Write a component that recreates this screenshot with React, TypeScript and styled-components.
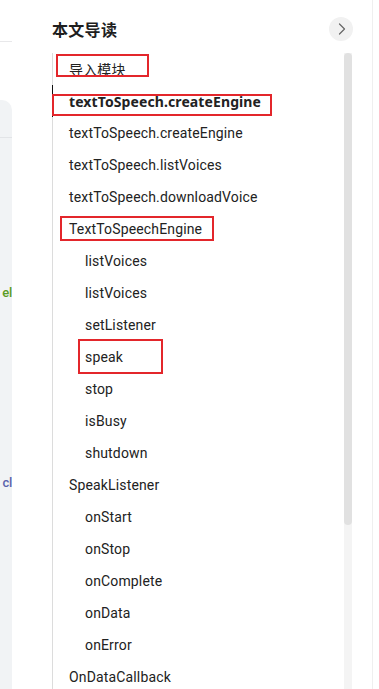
import React from 'react'
import { styled, createGlobalStyle } from 'styled-components'

const GlobalStyle = createGlobalStyle`
  html, body {
    margin: 0;
    padding: 0;
    background: #ffffff;
  }
  body {
    font-family: Roboto, "Liberation Sans", "Noto Sans CJK SC", sans-serif;
  }
`

type NavItem = {
  label: string
  level: 1 | 2
  active?: boolean
}

const items: NavItem[] = [
  { label: '导入模块', level: 1 },
  { label: 'textToSpeech.createEngine', level: 1, active: true },
  { label: 'textToSpeech.createEngine', level: 1 },
  { label: 'textToSpeech.listVoices', level: 1 },
  { label: 'textToSpeech.downloadVoice', level: 1 },
  { label: 'TextToSpeechEngine', level: 1 },
  { label: 'listVoices', level: 2 },
  { label: 'listVoices', level: 2 },
  { label: 'setListener', level: 2 },
  { label: 'speak', level: 2 },
  { label: 'stop', level: 2 },
  { label: 'isBusy', level: 2 },
  { label: 'shutdown', level: 2 },
  { label: 'SpeakListener', level: 1 },
  { label: 'onStart', level: 2 },
  { label: 'onStop', level: 2 },
  { label: 'onComplete', level: 2 },
  { label: 'onData', level: 2 },
  { label: 'onError', level: 2 },
  { label: 'OnDataCallback', level: 1 },
]

// annotation boxes drawn over the outline
const marks = [
  { left: 56, top: 54, width: 93, height: 23 },
  { left: 52, top: 94, width: 220, height: 22 },
  { left: 60, top: 216, width: 154, height: 25 },
  { left: 78, top: 339, width: 85, height: 35 },
]

export default function App() {
  return (
    <>
      <GlobalStyle />
      <Page>
        <LeftPane>
          <TopRule />
          <Card>
            <CardRule />
            <Snippet color="#5c9c24" offset={145}>
              el
            </Snippet>
            <Snippet color="#5b63ad" offset={170}>
              cl
            </Snippet>
          </Card>
        </LeftPane>

        <Outline>
          <Header>
            <Title>本文导读</Title>
            <CollapseButton aria-label="collapse">
              <svg width="8" height="12" viewBox="0 0 8 12" fill="none">
                <path d="M1.5 1 L6.5 6 L1.5 11" stroke="#666" strokeWidth="1.2" strokeLinecap="round" strokeLinejoin="round" />
              </svg>
            </CollapseButton>
          </Header>
          <Body>
            <List>
              {items.map((item, i) => (
                <Item key={i} level={item.level} active={item.active}>
                  {item.label}
                </Item>
              ))}
            </List>
            <ScrollTrack>
              <ScrollThumb />
            </ScrollTrack>
          </Body>
        </Outline>

        <RightEdge />

        {marks.map((m, i) => (
          <Mark key={i} style={{ left: m.left, top: m.top, width: m.width, height: m.height }} />
        ))}
      </Page>
    </>
  )
}

const Page = styled.div`
  position: relative;
  display: flex;
  width: 379px;
  height: 689px;
  overflow: hidden;
  background: #ffffff;
`

const LeftPane = styled.div`
  width: 12px;
  flex-shrink: 0;
  display: flex;
  flex-direction: column;
  margin-right: 40px;
`

const TopRule = styled.div`
  margin-top: 41px;
  height: 1px;
  background: #e8e8ea;
`

const Card = styled.div`
  margin-top: 58px;
  flex: 1;
  background: #f1f3f5;
  border-radius: 0 10px 0 0;
  overflow: hidden;
  display: flex;
  flex-direction: column;
`

const CardRule = styled.div`
  margin-top: 37px;
  height: 1px;
  background: #e2e4e7;
`

const Snippet = styled.div<{ color: string; offset: number }>`
  margin-top: ${({ offset }) => offset}px;
  display: flex;
  justify-content: flex-end;
  white-space: nowrap;
  font-size: 13px;
  line-height: 20px;
  font-weight: 500;
  letter-spacing: -0.3px;
  color: ${({ color }) => color};
`

const Outline = styled.div`
  width: 300px;
  flex-shrink: 0;
  display: flex;
  flex-direction: column;
`

const Header = styled.div`
  height: 53px;
  display: flex;
  align-items: center;
  justify-content: space-between;
  padding-top: 5px;
  box-sizing: border-box;
  margin-right: -1px;
`

const Title = styled.div`
  font-size: 16px;
  font-weight: 700;
  color: #1e1e1e;
  letter-spacing: 0.3px;
  font-family: "Noto Sans CJK SC", sans-serif;
`

const CollapseButton = styled.div`
  width: 24px;
  height: 24px;
  border-radius: 50%;
  background: #f1f1f1;
  display: flex;
  align-items: center;
  justify-content: center;
  padding-left: 1px;
  box-sizing: border-box;
`

const Body = styled.div`
  flex: 1;
  display: flex;
  min-height: 0;
`

const List = styled.div`
  flex: 1;
  border-left: 1px solid #dcdcdc;
  display: flex;
  flex-direction: column;
`

const Item = styled.div<{ level: 1 | 2; active?: boolean }>`
  height: 32px;
  flex-shrink: 0;
  display: flex;
  align-items: center;
  padding-left: ${({ level }) => (level === 1 ? 16 : 32)}px;
  margin-left: -1px;
  border-left: 1px solid ${({ active }) => (active ? '#111111' : 'transparent')};
  font-family: ${({ active }) =>
    active ? '"Noto Sans", Roboto, sans-serif' : 'Roboto, "Noto Sans CJK SC", sans-serif'};
  font-size: 14px;
  font-weight: ${({ active }) => (active ? 700 : 400)};
  letter-spacing: ${({ active }) => (active ? '0.1px' : '0.15px')};
  color: #222222;
  white-space: nowrap;
`

const ScrollTrack = styled.div`
  width: 8px;
  background: #f4f4f4;
  display: flex;
  flex-direction: column;
`

const ScrollThumb = styled.div`
  height: 472px;
  background: #e1e1e1;
  border-radius: 4px;
`

const RightEdge = styled.div`
  margin-left: 20px;
  width: 1px;
  background: #efefef;
`

const Mark = styled.div`
  position: absolute;
  border: 2px solid #e3262b;
  box-sizing: border-box;
  pointer-events: none;
`
